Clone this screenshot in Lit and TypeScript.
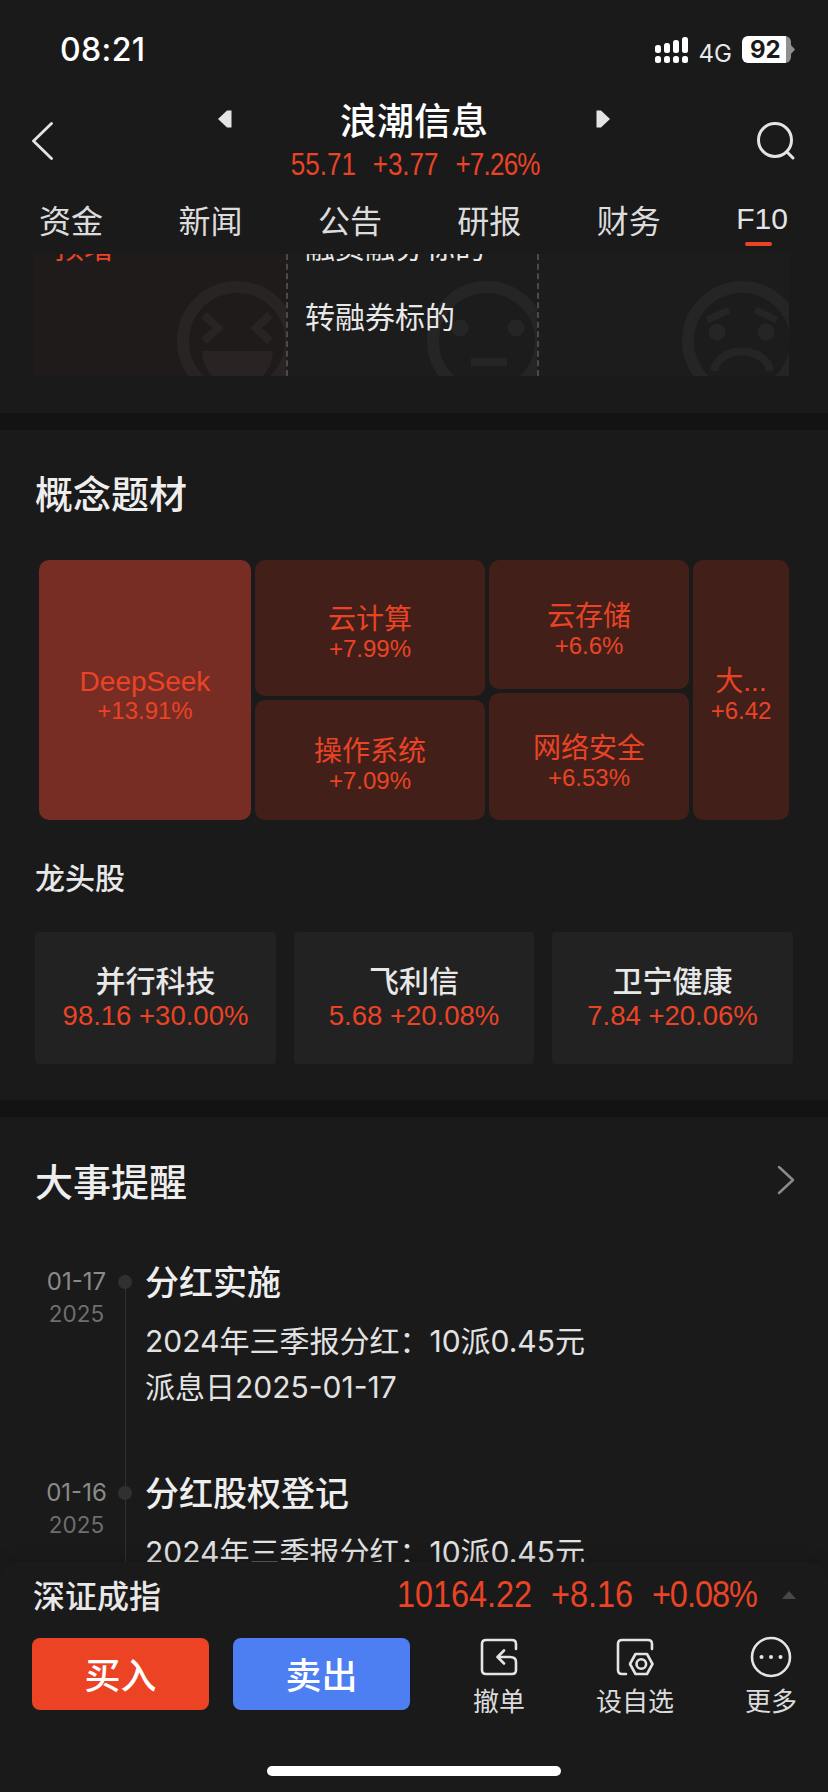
import { LitElement, html, css, svg } from "lit";
import { customElement } from "lit/decorators.js";

const treeCols = [
  { w: 212, items: [{ n: "DeepSeek", p: "+13.91%", h: 260, hot: true }] },
  { w: 230, items: [{ n: "云计算", p: "+7.99%", h: 136 }, { n: "操作系统", p: "+7.09%", h: 120 }] },
  { w: 200, items: [{ n: "云存储", p: "+6.6%", h: 129 }, { n: "网络安全", p: "+6.53%", h: 127 }] },
  { w: 96, items: [{ n: "大...", p: "+6.42", h: 260 }] },
];
const leaders = [
  { n: "并行科技", q: "98.16 +30.00%" },
  { n: "飞利信", q: "5.68 +20.08%" },
  { n: "卫宁健康", q: "7.84 +20.06%" },
];
const events = [
  { d: "01-17", y: "2025", t: "分红实施", l: ["2024年三季报分红：10派0.45元", "派息日2025-01-17"] },
  { d: "01-16", y: "2025", t: "分红股权登记", l: ["2024年三季报分红：10派0.45元", "股权登记日2025-01-16"] },
];

@customElement("app-root")
export class AppRoot extends LitElement {
  static styles = css`
    :host { display: block; width: 828px; height: 1792px; }
    * { box-sizing: border-box; }
    .page { position: relative; width: 828px; height: 1792px; overflow: hidden; display: flex; flex-direction: column;
      background: #1a1a1a; color: #e6e6e6; font-family: "Liberation Sans", "Noto Sans CJK SC", sans-serif; }
    .status { height: 90px; flex: none; display: flex; align-items: flex-start; padding: 31px 33px 0 60px; }
    .time { font: 500 32px/38px Inter, sans-serif; color: #fff; letter-spacing: 0.4px; flex: 1; }
    .sig { margin: 6px 11px 0 0; }
    .net { font: 400 24px/26px Inter, sans-serif; color: #e8e8e8; margin: 10px 10px 0 0; }
    .bat { width: 49px; height: 27px; margin-top: 5px; border-radius: 6px; background: linear-gradient(90deg, #fff 0 44px, #8f8f8f 44px);
      color: #1a1a1a; font: 700 24px/27px Inter, sans-serif; padding-left: 8px; }
    .nub { width: 4px; height: 9px; margin: 14px 0 0 0; background: #8f8f8f; clip-path: polygon(0 0, 100% 50%, 0 100%); }
    .nav { height: 100px; flex: none; display: grid; grid-template-columns: 1fr auto 1fr; padding: 0 32px; align-items: start; }
    .back { margin-top: 32px; display: block; }
    .search { margin-top: 31px; justify-self: end; display: block; }
    .mid { display: flex; flex-direction: column; align-items: center; }
    .tt { display: flex; align-items: center; gap: 108px; height: 58px; }
    .title { font: 500 37px/58px "Noto Sans CJK SC", sans-serif; color: #fff; }
    .price { font-size: 31px; line-height: 36px; color: #ea4325; white-space: nowrap; transform: scaleX(0.84); margin: -1px 0 0 3px; display: flex; gap: 20px; }
    .tight { letter-spacing: -0.03em; }
    .tabs { height: 64px; flex: none; display: flex; justify-content: space-between; padding: 0 40px 0 39px; }
    .tab { position: relative; font: 400 32px/42px "Noto Sans CJK SC", sans-serif; color: #dcdcdc; height: 64px; padding-top: 8px; }
    .tab.on { font: 500 30px/42px "Liberation Sans", sans-serif; color: #e3e4e8; }
    .tab.on::after { content: ""; position: absolute; left: 9px; top: 52px; width: 27px; height: 4px; border-radius: 2px; background: #ea4325; }
    .scroll { flex: 1; overflow: hidden; min-height: 0; }
    .cells { display: grid; grid-template-columns: 252px 253px 250px; margin: 0 39px 0 34px; height: 122px; }
    .cell { position: relative; overflow: hidden; padding: 0 0 0 17px; font: 400 30px/48px "Noto Sans CJK SC", sans-serif; color: #e8e8e8; }
    .cell.a { background: #1f1b1b; color: #ea4325; padding-left: 20px; }
    .cell.b { background: #1c1c1c; border-left: 2px dashed #4a4a4a; border-right: 2px dashed #4a4a4a; }
    .cell.c { background: #1b1c1b; }
    .cell .tx { position: relative; margin-top: -33px; }
    .cell .tx.second { margin-top: 22px; }
    .face { position: absolute; top: 27px; }
    .sep { height: 17px; background: #131313; }
    .s1 { height: 37px; }
    .h2 { font: 500 38px/48px "Noto Sans CJK SC", sans-serif; color: #eee; margin: 0; padding: 0 0 0 35px; }
    .concept { padding-top: 38px; height: 670px; }
    .tree { display: flex; gap: 4px; margin: 44px 39px 0 39px; height: 260px; }
    .col { display: flex; flex-direction: column; justify-content: space-between; flex: none; }
    .tile { flex: none; border-radius: 10px; background: #422019; color: #ea4325; display: flex; flex-direction: column; align-items: center; justify-content: center; text-align: center; overflow: hidden; padding-top: 10px; }
    .tile.hot { background: #772d24; }
    .tn { font-size: 28px; line-height: 32px; font-family: "Liberation Sans", "Noto Sans CJK SC", sans-serif; }
    .tp { font-size: 24px; line-height: 26px; }
    .h3 { font: 500 30px/40px "Noto Sans CJK SC", sans-serif; color: #e8e8e8; margin: 36px 0 0 0; padding-left: 35px; }
    .leaders { display: grid; grid-template-columns: 241px 240px 241px; gap: 18px; margin: 36px 35px 0 35px; }
    .ld { height: 132px; background: #222; border-radius: 4px; display: flex; flex-direction: column; align-items: center; padding-top: 26px; }
    .ln { font: 500 30px/42px "Noto Sans CJK SC", sans-serif; color: #e8e8e8; }
    .lq { font-size: 27.500px; line-height: 34px; color: #ea4325; margin-top: -1px; }
    .events { padding-top: 39px; }
    .ehead { display: flex; align-items: center; justify-content: space-between; padding-right: 33px; }
    .list { margin-top: 54px; }
    .ev { display: grid; grid-template-columns: 83px 14px 1fr; height: 211px; padding-left: 35px; }
    .dt { text-align: center; font: 400 24px/30px Inter, sans-serif; color: #8a8a8a; padding-top: 9px; }
    .dy { display: block; color: #6e6e6e; font-size: 22.500px; line-height: 30px; margin-top: 2px; }
    .rail { position: relative; }
    .rail::before { content: ""; position: absolute; left: 7px; top: 16px; bottom: -16px; width: 1px; background: #303030; }
    .dot { position: absolute; left: 0; top: 17px; width: 14px; height: 14px; border-radius: 50%; background: #303030; }
    .bd { padding-left: 13px; }
    .et { font: 500 34px/46px "Noto Sans CJK SC", sans-serif; color: #eee; }
    .el { font: 400 30px/46px Inter, "Noto Sans CJK SC", sans-serif; color: #e2e2e2; }
    .et + .el { margin-top: 14px; }
    .bar { position: absolute; left: 0; right: 0; bottom: 0; height: 230px; background: #1a1a1a; border-radius: 20px 20px 0 0;
      box-shadow: 0 -6px 14px rgba(0,0,0,0.12); padding-top: 13px; }
    .idx { display: flex; align-items: center; height: 40px; padding: 0 33px; }
    .iname { font: 500 32px/40px "Noto Sans CJK SC", sans-serif; color: #e8e8e8; flex: 1; margin-top: -2px; }
    .nums { display: flex; gap: 21px; font-size: 36px; line-height: 40px; color: #ea4325; transform: scaleX(0.9); transform-origin: right center; white-space: nowrap; margin-right: 25px; }
    .tri { width: 0; height: 0; border-left: 7px solid transparent; border-right: 7px solid transparent; border-bottom: 8px solid #484848; margin-right: -1px; }
    .acts { display: flex; padding: 23px 0 0 32px; align-items: flex-start; }
    .btn { width: 177px; height: 72px; border-radius: 8px; color: #fff; font: 500 36px/70px "Noto Sans CJK SC", sans-serif; text-align: center; margin-right: 24px; }
    .buy { background: #eb4323; }
    .sell { background: #4d7ef2; margin-right: 0; }
    .tools { display: flex; margin-left: 50px; gap: 58px; }
    .tl { display: flex; flex-direction: column; align-items: center; width: 78px; font: 400 26px/28px "Noto Sans CJK SC", sans-serif; color: #dcdcdc; }
    .tl svg { display: block; margin-bottom: 10px; }
    .tl svg.ring { margin: -2px 0 8px; }
    .home { position: absolute; left: 267px; bottom: 16px; width: 294px; height: 10px; border-radius: 5px; background: #fff; }
  `;

  face(kind: string) {
    const fg = kind === "a" ? "#292423" : kind === "b" ? "#252525" : "#242524";
    const inner =
      kind === "a"
        ? svg`<path d="M27 34L41 47L27 60M93 34L79 47L93 60" fill="none" stroke=${fg} stroke-width="8"/><path d="M25 70H96A35.500 35.500 0 0 1 25 70Z" fill=${fg}/>`
        : kind === "b"
        ? svg`<circle cx="33" cy="47" r="8.500" fill=${fg}/><circle cx="89" cy="47" r="8.500" fill=${fg}/><rect x="44" y="77" width="36" height="8" fill=${fg}/>`
        : svg`<circle cx="35" cy="51" r="8.500" fill=${fg}/><circle cx="84" cy="51" r="8.500" fill=${fg}/><path d="M25 39L47 29M73 29L95 39" stroke=${fg} stroke-width="7" fill="none"/><path d="M32 90C36 64 84 64 88 90" stroke=${fg} stroke-width="8" fill="none"/>`;
    const right = kind === "a" ? "-11px" : kind === "b" ? "-10px" : "-13px";
    return html`<svg class="face" style="right:${right}" width="120" height="120" viewBox="0 0 120 120">
      <circle cx="60" cy="60" r="54" fill="none" stroke=${fg} stroke-width="12"></circle>${inner}</svg>`;
  }

  render() {
    return html`<div class="page">
      <div class="status">
        <div class="time">08:21</div>
        <svg class="sig" width="33" height="26" viewBox="0 0 33 26" fill="#fff">
          <rect x="0" y="8" width="6" height="8" rx="2.500"></rect><rect x="9" y="6" width="6" height="10" rx="2.500"></rect>
          <rect x="18" y="3" width="6" height="13" rx="2.500"></rect><rect x="27" y="0" width="6" height="16" rx="2.500"></rect>
          <rect x="0" y="19" width="6" height="7" rx="2.500"></rect><rect x="9" y="19" width="6" height="7" rx="2.500"></rect>
          <rect x="18" y="19" width="6" height="7" rx="2.500"></rect><rect x="27" y="19" width="6" height="7" rx="2.500"></rect>
        </svg>
        <div class="net">4G</div>
        <div class="bat">92</div>
        <div class="nub"></div>
      </div>
      <div class="nav">
        <svg class="back" width="22" height="38" viewBox="0 0 22 38" fill="none" stroke="#e4e4e4" stroke-width="2.800" stroke-linecap="round" stroke-linejoin="round"><path d="M19.500 1.500L1.500 19L19.500 36.500"></path></svg>
        <div class="mid">
          <div class="tt">
            <svg width="15" height="18" viewBox="0 0 15 18" fill="#e4e4e4"><path d="M14.500 0.500V17.500H10L1 9L10 0.500Z"></path></svg>
            <div class="title">浪潮信息</div>
            <svg width="15" height="18" viewBox="0 0 15 18" fill="#e4e4e4"><path d="M0.500 0.500V17.500H5L14 9L5 0.500Z"></path></svg>
          </div>
          <div class="price"><span>55.71</span><span>+3.77</span><span class="tight">+7.26%</span></div>
        </div>
        <svg class="search" width="40" height="40" viewBox="0 0 40 40" fill="none" stroke="#e4e4e4" stroke-width="3" stroke-linecap="round"><circle cx="19" cy="19" r="16.500"></circle><path d="M31 31L37 37"></path></svg>
      </div>
      <div class="tabs">
        ${["资金", "新闻", "公告", "研报", "财务"].map((t) => html`<div class="tab">${t}</div>`)}
        <div class="tab on">F10</div>
      </div>
      <div class="scroll">
        <div class="cells">
          <div class="cell a">${this.face("a")}<div class="tx">预增</div></div>
          <div class="cell b">${this.face("b")}<div class="tx">融资融券标的</div><div class="tx second">转融券标的</div></div>
          <div class="cell c">${this.face("c")}</div>
        </div>
        <div class="s1"></div>
        <div class="sep"></div>
        <section class="concept">
          <h2 class="h2">概念题材</h2>
          <div class="tree">
            ${treeCols.map((c) => html`<div class="col" style="width:${c.w}px">
              ${c.items.map((i: any) => html`<div class="tile ${i.hot ? "hot" : ""}" style="height:${i.h}px">
                <div class="tn">${i.n}</div><div class="tp">${i.p}</div></div>`)}
            </div>`)}
          </div>
          <h3 class="h3">龙头股</h3>
          <div class="leaders">
            ${leaders.map((l) => html`<div class="ld"><div class="ln">${l.n}</div><div class="lq">${l.q}</div></div>`)}
          </div>
        </section>
        <div class="sep"></div>
        <section class="events">
          <div class="ehead">
            <h2 class="h2">大事提醒</h2>
            <svg width="18" height="30" viewBox="0 0 18 30" fill="none" stroke="#8a8a8a" stroke-width="2.500" stroke-linecap="round" stroke-linejoin="round"><path d="M2 2L16 15L2 28"></path></svg>
          </div>
          <div class="list">
            ${events.map((e) => html`<div class="ev">
              <div class="dt">${e.d}<span class="dy">${e.y}</span></div>
              <div class="rail"><div class="dot"></div></div>
              <div class="bd"><div class="et">${e.t}</div>${e.l.map((x) => html`<div class="el">${x}</div>`)}</div>
            </div>`)}
          </div>
        </section>
      </div>
      <div class="bar">
        <div class="idx">
          <div class="iname">深证成指</div>
          <div class="nums"><span>10164.22</span><span>+8.16</span><span class="tight">+0.08%</span></div>
          <div class="tri"></div>
        </div>
        <div class="acts">
          <div class="btn buy">买入</div>
          <div class="btn sell">卖出</div>
          <div class="tools">
            <div class="tl">
              <svg width="38" height="38" viewBox="0 0 38 38" fill="none" stroke="#e4e4e4" stroke-width="2.600" stroke-linecap="round" stroke-linejoin="round"><path d="M36 11V6Q36 2 32 2H6Q2 2 2 6V32Q2 36 6 36H32Q36 36 36 32V24C36 20 33 19 30 19H18M24 12.500L17.500 19L24 25.500"></path></svg>
              撤单
            </div>
            <div class="tl">
              <svg width="38" height="38" viewBox="0 0 38 38" fill="none" stroke="#e4e4e4" stroke-width="2.600" stroke-linecap="round" stroke-linejoin="round"><path d="M36 11V6Q36 2 32 2H6Q2 2 2 6V32Q2 36 6 36H10"></path><path d="M14 26L19.500 16H31L36.500 26L31 36H19.500Z"></path><circle cx="25.300" cy="26" r="4.800"></circle></svg>
              设自选
            </div>
            <div class="tl">
              <svg class="ring" width="42" height="42" viewBox="0 0 42 42" fill="none" stroke="#e4e4e4" stroke-width="2.600"><circle cx="21" cy="21" r="19"></circle><circle cx="11.500" cy="21" r="2" fill="#e4e4e4" stroke="none"></circle><circle cx="21" cy="21" r="2" fill="#e4e4e4" stroke="none"></circle><circle cx="30.500" cy="21" r="2" fill="#e4e4e4" stroke="none"></circle></svg>
              更多
            </div>
          </div>
        </div>
        <div class="home"></div>
      </div>
    </div>`;
  }
}
